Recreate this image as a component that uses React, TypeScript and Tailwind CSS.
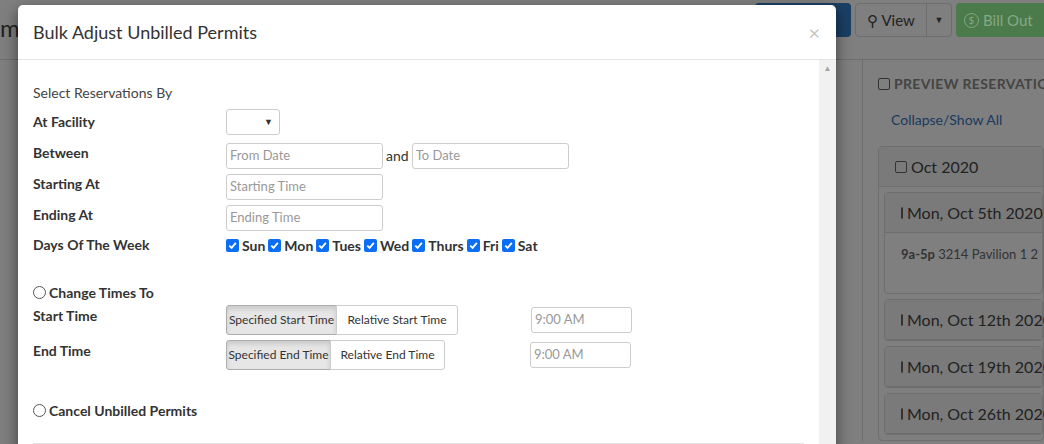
import React from "react";

const days = ["Sun", "Mon", "Tues", "Wed", "Thurs", "Fri", "Sat"];

function Check() {
  return (
    <span className="inline-flex size-[13px] items-center justify-center rounded-[2px] bg-[#0b6ef5]">
      <svg viewBox="0 0 12 12" className="size-[11px]" aria-hidden>
        <path d="M2.5 6.2 5 8.6 9.6 3.2" fill="none" stroke="#fff" strokeWidth="2" />
      </svg>
    </span>
  );
}

function Radio() {
  return <span className="inline-block size-[13px] rounded-full border border-[#555] bg-white" />;
}

function Row({ label, children, h = "h-[31px]" }: { label: string; children?: React.ReactNode; h?: string }) {
  return (
    <div className={`flex items-center ${h}`}>
      <div className="w-[193px] font-bold text-[#333]">{label}</div>
      <div className="flex items-center">{children}</div>
    </div>
  );
}

function Input({ ph, w = "w-[157px]" }: { ph: string; w?: string }) {
  return (
    <div className={`${w} flex h-[26px] items-center rounded-[3px] border border-[#ccc] bg-white px-[3px] text-[13px] text-[#999]`}>
      {ph}
    </div>
  );
}

function Seg({ a, b, wa, wb }: { a: string; b: string; wa: string; wb: string }) {
  return (
    <div className="flex h-[30px] whitespace-nowrap text-[12px] text-[#333]">
      <div className={`${wa} flex items-center justify-center rounded-l-[3px] border border-[#adadad] bg-[#e6e6e6] shadow-[inset_0_3px_5px_rgba(0,0,0,0.125)]`}>{a}</div>
      <div className={`${wb} -ml-px flex items-center justify-center rounded-r-[3px] border border-[#ccc] bg-white`}>{b}</div>
    </div>
  );
}

function Card({ title, children }: { title: string; children?: React.ReactNode }) {
  return (
    <div className="rounded-[4px] border border-[#6e6e6e] bg-[#7f7f7f]">
      <div className="flex h-[40px] items-center gap-1 border-b border-[#6e6e6e] bg-[#7a7a7a] px-4 text-[16px] text-[#222]">
        <span className="inline-block size-[12px] rounded-[2px] border border-[#333]" />
        <span className="whitespace-nowrap">{title}</span>
      </div>
      {children}
    </div>
  );
}

export default function App() {
  return (
    <div className="relative h-[444px] w-[1044px] overflow-hidden bg-[#7f7f7f] text-[14px] font-[Lato,sans-serif]">
      {/* page behind overlay */}
      <div className="flex h-[60px] items-start justify-end gap-1 border-b border-[#6e6e6e] pt-[3px]">
        <div className="h-[34px] w-[96px] rounded-[4px] bg-[#1b3f64]" />
        <div className="flex h-[34px] w-[97px] rounded-[4px] border border-[#6e6e6e] text-[#222]">
          <div className="flex flex-1 items-center justify-center gap-1 border-r border-[#6e6e6e]">
            <span className="text-[15px]">⚲ View</span>
          </div>
          <div className="flex w-[24px] items-center justify-center text-[9px]">▼</div>
        </div>
        <div className="flex h-[34px] w-[88px] items-center gap-1 rounded-l-[4px] bg-[#4b7a4b] pl-2 text-[15px] text-[#86a886]">
          <span className="flex size-[15px] items-center justify-center rounded-full border border-[#86a886] text-[10px]">$</span>Bill Out
        </div>
      </div>
      <div className="flex">
        <div className="w-[862px] shrink-0 text-[15px] text-[#222]">
          <div className="-mt-[50px] text-[24px]">mi</div>
        </div>
        <div className="flex-1 overflow-hidden border-l border-[#6e6e6e] pl-[15px] pt-[13px]">
          <div className="flex items-center gap-1 whitespace-nowrap text-[14px] font-bold tracking-wide text-[#444]">
            <span className="inline-block size-[12px] shrink-0 rounded-[2px] border border-[#333]" />PREVIEW RESERVATION
          </div>
          <div className="mt-[15px] pl-[13px] text-[14px] text-[#173a5e]">Collapse/Show All</div>
          <div className="mt-[16px]">
            <Card title="Oct 2020">
              <div className="space-y-[5px] p-[5px] pr-0">
                <Card title="Mon, Oct 5th 2020">
                  <div className="h-[60px] whitespace-nowrap px-4 pt-[12px] text-[13px] text-[#333]"><b>9a-5p</b> 3214 Pavilion 1 2</div>
                </Card>
                <Card title="Mon, Oct 12th 2020" />
                <Card title="Mon, Oct 19th 2020" />
                <Card title="Mon, Oct 26th 2020" />
              </div>
            </Card>
          </div>
        </div>
      </div>

      {/* modal */}
      <div className="absolute left-[18px] top-[5px] h-[460px] w-[818px] overflow-hidden rounded-[5px] bg-white shadow-[0_5px_15px_rgba(0,0,0,0.5)]">
        <div className="flex h-[55px] items-center justify-between border-b border-[#e5e5e5] pl-[15px] pr-[16px]">
          <div className="text-[18px] text-[#333]">Bulk Adjust Unbilled Permits</div>
          <div className="text-[20px] leading-none text-[#c4c4c4]">×</div>
        </div>
        <div className="flex h-full">
          <div className="flex-1 px-[15px] pt-[22px] text-[#333]">
            <div className="h-[24px] text-[14px] text-[#444]">Select Reservations By</div>
            <Row label="At Facility">
              <div className="flex h-[26px] w-[54px] items-center justify-end rounded-[3px] border border-[#ccc] bg-white pr-[6px] text-[9px]">▼</div>
            </Row>
            <Row label="Between">
              <div className="flex items-center pt-[6px]">
                <Input ph="From Date" />
                <span className="mx-[3px] text-[#333]">and</span>
                <Input ph="To Date" />
              </div>
            </Row>
            <Row label="Starting At"><div className="pt-[6px]"><Input ph="Starting Time" /></div></Row>
            <Row label="Ending At"><div className="pt-[6px]"><Input ph="Ending Time" /></div></Row>
            <Row label="Days Of The Week" h="h-[28px]">
              <div className="flex items-center gap-[3px] pt-[2px] font-bold text-[#333]">
                {days.map((d) => (
                  <span key={d} className="flex items-center gap-[3px]"><Check />{d}</span>
                ))}
              </div>
            </Row>
            <div className="mt-[21px] flex h-[26px] items-center gap-[3px] font-bold"><Radio />Change Times To</div>
            <div className="flex h-[35px] items-start">
              <div className="w-[193px] font-bold">Start Time</div>
              <Seg a="Specified Start Time" b="Relative Start Time" wa="w-[111px]" wb="w-[122px]" />
              <div className="ml-[73px] mt-[2px]"><Input ph="9:00 AM" w="w-[101px]" /></div>
            </div>
            <div className="flex h-[35px] items-start">
              <div className="w-[193px] font-bold">End Time</div>
              <Seg a="Specified End Time" b="Relative End Time" wa="w-[105px]" wb="w-[115px]" />
              <div className="ml-[85px] mt-[2px]"><Input ph="9:00 AM" w="w-[101px]" /></div>
            </div>
            <div className="mt-[22px] flex h-[26px] items-center gap-[3px] font-bold"><Radio />Cancel Unbilled Permits</div>
            <div className="mt-[20px] border-t border-[#e5e5e5]" />
          </div>
          <div className="flex w-[17px] justify-center bg-[#f1f1f1] pt-[2px] text-[8px] text-[#a3a3a3]">▲</div>
        </div>
      </div>
    </div>
  );
}
